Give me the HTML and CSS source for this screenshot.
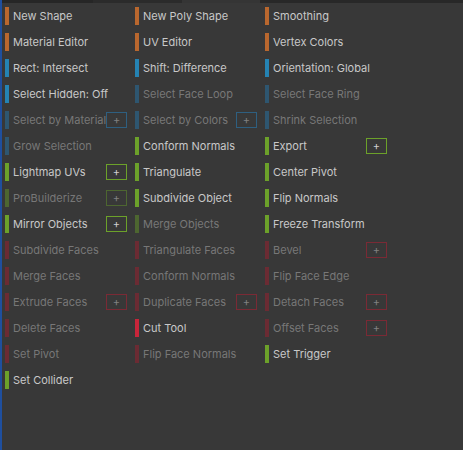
FILE: index.html
```html
<!DOCTYPE html>
<html>
<head>
<meta charset="utf-8">
<link rel="stylesheet" href="styles.css">
</head>
<body>
<div class="window">
  <div class="tabs">
    <span class="tab t1"></span><span class="tab t2"></span><span class="tab t3"></span><span class="tab t4"></span>
  </div>
  <div class="grid">
    <div class="item orange"><span class="bar"></span><span class="label">New Shape</span></div>
    <div class="item orange"><span class="bar"></span><span class="label">New Poly Shape</span></div>
    <div class="item orange"><span class="bar"></span><span class="label">Smoothing</span></div>

    <div class="item orange"><span class="bar"></span><span class="label">Material Editor</span></div>
    <div class="item orange"><span class="bar"></span><span class="label">UV Editor</span></div>
    <div class="item orange"><span class="bar"></span><span class="label">Vertex Colors</span></div>

    <div class="item blue"><span class="bar"></span><span class="label">Rect: Intersect</span></div>
    <div class="item blue"><span class="bar"></span><span class="label">Shift: Difference</span></div>
    <div class="item blue"><span class="bar"></span><span class="label">Orientation: Global</span></div>

    <div class="item blue"><span class="bar"></span><span class="label">Select Hidden: Off</span></div>
    <div class="item blue dim"><span class="bar"></span><span class="label">Select Face Loop</span></div>
    <div class="item blue dim"><span class="bar"></span><span class="label">Select Face Ring</span></div>

    <div class="item blue dim"><span class="bar"></span><span class="label">Select by Material</span><span class="plus">+</span></div>
    <div class="item blue dim"><span class="bar"></span><span class="label">Select by Colors</span><span class="plus">+</span></div>
    <div class="item blue dim"><span class="bar"></span><span class="label">Shrink Selection</span></div>

    <div class="item blue dim"><span class="bar"></span><span class="label">Grow Selection</span></div>
    <div class="item green"><span class="bar"></span><span class="label">Conform Normals</span></div>
    <div class="item green"><span class="bar"></span><span class="label">Export</span><span class="plus">+</span></div>

    <div class="item green"><span class="bar"></span><span class="label">Lightmap UVs</span><span class="plus">+</span></div>
    <div class="item green"><span class="bar"></span><span class="label">Triangulate</span></div>
    <div class="item green"><span class="bar"></span><span class="label">Center Pivot</span></div>

    <div class="item green dim"><span class="bar"></span><span class="label">ProBuilderize</span><span class="plus">+</span></div>
    <div class="item green"><span class="bar"></span><span class="label">Subdivide Object</span></div>
    <div class="item green"><span class="bar"></span><span class="label">Flip Normals</span></div>

    <div class="item green"><span class="bar"></span><span class="label">Mirror Objects</span><span class="plus">+</span></div>
    <div class="item green dim"><span class="bar"></span><span class="label">Merge Objects</span></div>
    <div class="item green"><span class="bar"></span><span class="label">Freeze Transform</span></div>

    <div class="item red dim"><span class="bar"></span><span class="label">Subdivide Faces</span></div>
    <div class="item red dim"><span class="bar"></span><span class="label">Triangulate Faces</span></div>
    <div class="item red dim"><span class="bar"></span><span class="label">Bevel</span><span class="plus">+</span></div>

    <div class="item red dim"><span class="bar"></span><span class="label">Merge Faces</span></div>
    <div class="item red dim"><span class="bar"></span><span class="label">Conform Normals</span></div>
    <div class="item red dim"><span class="bar"></span><span class="label">Flip Face Edge</span></div>

    <div class="item red dim"><span class="bar"></span><span class="label">Extrude Faces</span><span class="plus">+</span></div>
    <div class="item red dim"><span class="bar"></span><span class="label">Duplicate Faces</span><span class="plus">+</span></div>
    <div class="item red dim"><span class="bar"></span><span class="label">Detach Faces</span><span class="plus">+</span></div>

    <div class="item red dim"><span class="bar"></span><span class="label">Delete Faces</span></div>
    <div class="item red"><span class="bar"></span><span class="label">Cut Tool</span></div>
    <div class="item red dim"><span class="bar"></span><span class="label">Offset Faces</span><span class="plus">+</span></div>

    <div class="item red dim"><span class="bar"></span><span class="label">Set Pivot</span></div>
    <div class="item red dim"><span class="bar"></span><span class="label">Flip Face Normals</span></div>
    <div class="item green"><span class="bar"></span><span class="label">Set Trigger</span></div>

    <div class="item green"><span class="bar"></span><span class="label">Set Collider</span></div>
  </div>
</div>
</body>
</html>
```

FILE: styles.css
```css
html, body {
  margin: 0;
  padding: 0;
  background: #383838;
}

.window {
  width: 463px;
  height: 450px;
  box-sizing: border-box;
  border-left: 2px solid #1f4f9e;
  background: #383838;
  font-family: Inter, "Noto Sans", sans-serif;
  font-size: 11px;
  overflow: hidden;
}

.tabs {
  display: flex;
  height: 3px;
}

.tab { display: block; height: 3px; }
.t1 { width: 91px; background: #262626; }
.t2 { width: 89px; background: #2b2b2b; }
.t3 { width: 78px; background: #353535; }
.t4 { flex: 1; background: #282828; }

.grid {
  display: grid;
  grid-template-columns: repeat(3, 130px);
  grid-auto-rows: 18px;
  row-gap: 8px;
  padding: 4px 0 0 3px;
}

.item {
  display: flex;
  align-items: center;
  width: 122px;
  height: 18px;
  color: #c8c8c8;
}

.bar {
  width: 4px;
  height: 18px;
  flex: none;
}

.label {
  flex: 1;
  margin-left: 4px;
  white-space: nowrap;
  line-height: 18px;
}

.plus {
  flex: none;
  width: 19px;
  height: 14px;
  border: 1px solid;
  display: flex;
  align-items: center;
  justify-content: center;
  font-size: 11px;
  line-height: 14px;
  color: #cfcfcf;
}

.orange .bar { background: #b9672e; }
.blue .bar { background: #2583b3; }
.green .bar { background: #6ca12a; }
.red .bar { background: #c8253a; }

.blue.dim .bar { background: #2e5670; }
.green.dim .bar { background: #4d6630; }
.red.dim .bar { background: #6b2b33; }

.dim { color: #777777; }
.dim .plus { color: #808080; }

.blue .plus { border-color: #2e5f80; }
.green .plus { border-color: #6ca12a; }
.green.dim .plus { border-color: #4d6630; }
.red .plus { border-color: #7a2a35; }
```
